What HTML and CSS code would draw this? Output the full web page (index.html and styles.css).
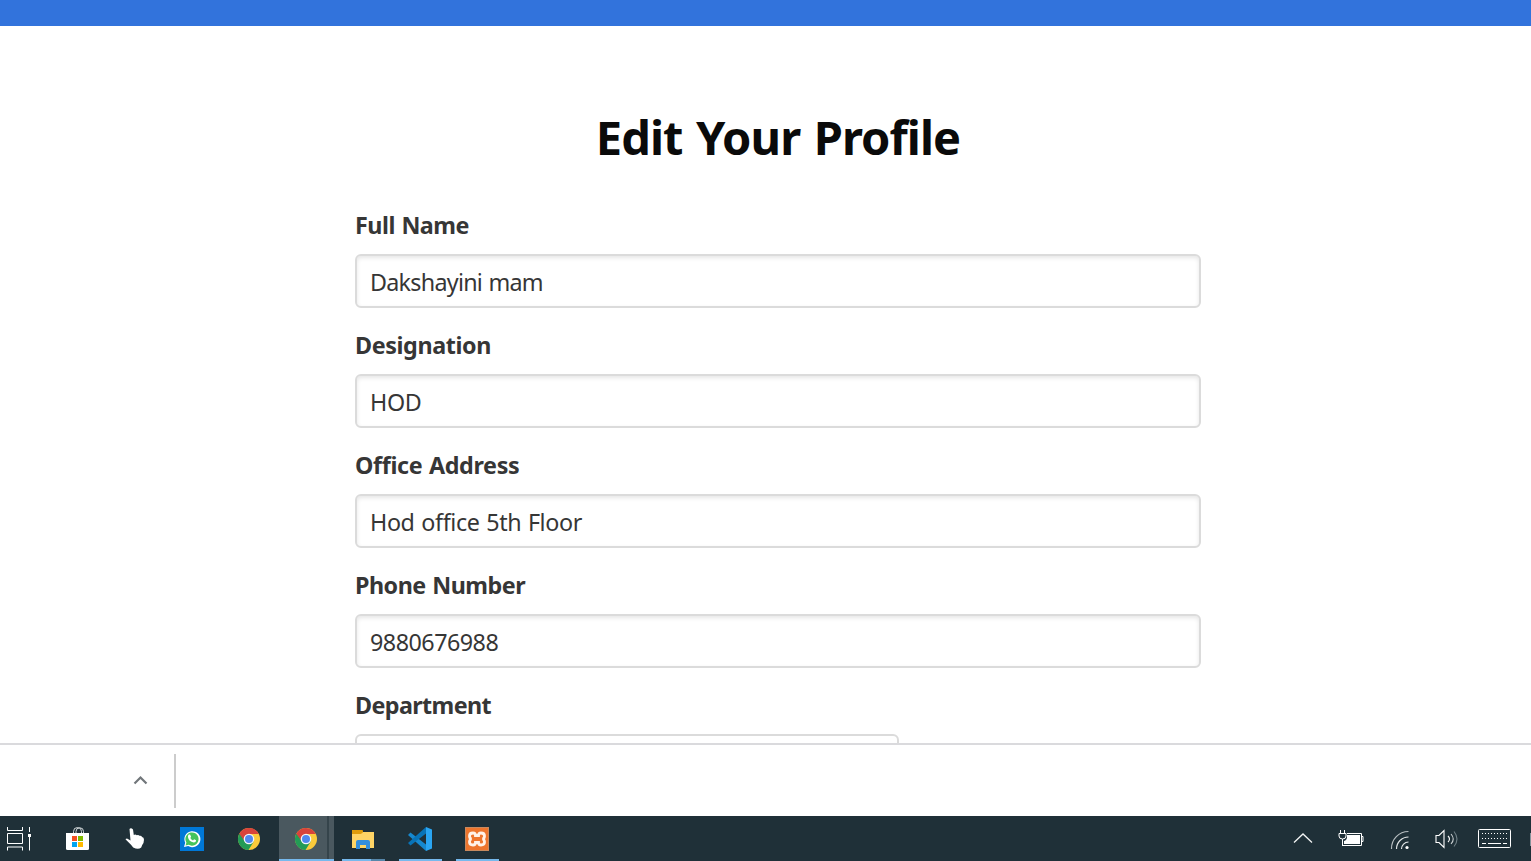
FILE: index.html
```html
<!DOCTYPE html>
<html lang="en">
<head>
<meta charset="utf-8">
<title>Edit Your Profile</title>
<link rel="stylesheet" href="styles.css">
</head>
<body>
<svg class="defs" width="0" height="0" aria-hidden="true">
  <defs>
    <g id="chrome">
      <circle cx="12" cy="12" r="11" fill="#fbcb3b"/>
      <path d="M12 12 2.2 6.8A11 11 0 0 0 11.5 23L16.8 14.5Z" fill="#239b56"/>
      <path d="M2.3 6.8A11 11 0 0 1 21.8 7H12L7.5 14Z" fill="#d8433b"/>
      <circle cx="12" cy="12" r="5.3" fill="#f4f6f8"/>
      <circle cx="12" cy="12" r="4" fill="#5088ee"/>
    </g>
  </defs>
</svg>
<div class="screen">
  <header class="navbar"></header>
  <main class="page">
    <form class="form">
      <h1 class="title">Edit Your Profile</h1>
      <div class="field"><label class="label l-name" for="name">Full Name</label><input class="input i-name" id="name" value="Dakshayini mam"></div>
      <div class="field"><label class="label l-desig" for="desig">Designation</label><input class="input i-desig" id="desig" value="HOD"></div>
      <div class="field"><label class="label l-office" for="office">Office Address</label><input class="input i-office" id="office" value="Hod office 5th Floor"></div>
      <div class="field"><label class="label l-phone" for="phone">Phone Number</label><input class="input i-phone" id="phone" value="9880676988"></div>
      <div class="field"><label class="label l-dept" for="dept">Department</label><input class="input select" id="dept"></div>
    </form>
  </main>
  <div class="downloads">
    <svg class="caret" width="15" height="10" viewBox="0 0 15 10"><path d="M1.500 8.500 7.500 2.500 13.500 8.500" fill="none" stroke="#71767a" stroke-width="2.200"/></svg>
    <span class="divider"></span>
  </div>
  <footer class="taskbar">
    <div class="apps">
      <div class="app">
        <svg class="taskview" width="28" height="26" viewBox="0 0 28 26" fill="none" stroke="#fff"><path d="M1.500 1v3.500h15V1M1.500 24.500v-3.500h15v3.500M1.500 7.500h15v10h-15zM23.500 1v5M23.500 11v13.500"/><path d="M22 8h3v3h-3z" fill="#fff" stroke="none"/></svg>
      </div>
      <div class="app">
        <svg width="24" height="26" viewBox="0 0 24 26"><path d="M7.500 8V5.500a4 4 0 0 1 8 0V8M10 7V5.500a3.500 3.500 0 0 1 7.500 0V8" fill="none" stroke="#cfd5d7"/><path d="M0 7h23v15.500q0 1.500-1.500 1.500H1.500Q0 24 0 22.500z" fill="#fff"/><path d="M6 10h5v5H6z" fill="#f25022"/><path d="M12 10h5v5h-5z" fill="#7fba00"/><path d="M6 16h5v5H6z" fill="#00a4ef"/><path d="M12 16h5v5h-5z" fill="#ffb900"/></svg>
      </div>
      <div class="app">
        <svg width="24" height="26" viewBox="0 0 24 26"><path d="M6.500 3q1.500-1.500 3.500.5l.8 5.500q1.500-1 3 .2 1.700-.7 2.700.6 2-.4 2.500 1.200 2 .4 2 2.700 0 3-1.800 5.300l-1 2.500q-3 2.500-8 0l-2-2.500-5-5Q1.500 12.500 4 12.500l3.500 2z" fill="#fff"/></svg>
      </div>
      <div class="app">
        <svg width="24" height="24" viewBox="0 0 24 24"><path d="M0 0h24v24H0z" fill="#0078d7"/><path d="m4 20 1.200-4.300A8 8 0 1 1 8.200 19z" fill="#fff"/><path d="m5.600 18.500.8-2.900a6.600 6.600 0 1 1 2.300 2.200z" fill="#45c45b"/><path d="M8.800 7.600h1.300l1 2.200-.8 1.200q.9 1.700 2.700 2.400l1.100-1.100 2 1q0 2.300-2.300 2.300Q8.600 14.500 7.900 9.700q0-1.400.9-2.100z" fill="#fff"/></svg>
      </div>
      <div class="app"><svg width="24" height="24" viewBox="0 0 24 24"><use href="#chrome"/></svg></div>
      <div class="app active"><svg width="24" height="24" viewBox="0 0 24 24"><use href="#chrome"/></svg></div>
      <div class="app open stacked">
        <svg width="24" height="24" viewBox="0 0 24 24"><path d="M1 5h22v16H1z" fill="#ffd465"/><path d="M1 3h10q1.500 0 1 1.500L11.500 6l-2 1H1z" fill="#df9c0c"/><path d="M5 22v-7q0-2 2-2h10q2 0 2 2v7h-4v-4H9v4z" fill="#338edd"/></svg>
      </div>
      <div class="app open">
        <svg width="24" height="24" viewBox="0 0 24 24"><path d="m0 8 2.500-2.500L18 17.500V24z" fill="#1688cf"/><path d="m0 16 2.500 2.500L18 6.500V0z" fill="#0873b7"/><path d="m18 0 6 2.500v19L18 24z" fill="#2aa5f2"/></svg>
      </div>
      <div class="app open">
        <svg width="24" height="24" viewBox="0 0 24 24"><path d="M0 0h24v24H0z" fill="#ed752d"/><path d="M.500.500h23v23H.500z" fill="none" stroke="#c78a60"/><path d="M8 6q-3.500 0-3.500 3 0 2.500 2 3-2 .5-2 3 0 3 3.500 3 2.500 0 2.500-2.500h3Q13.500 18 16 18q3.500 0 3.500-3 0-2.500-2-3 2-.5 2-3 0-3-3.500-3-2.500 0-2.500 2.500h-3Q10.500 6 8 6z" fill="none" stroke="#fff2e8" stroke-width="2.800"/></svg>
      </div>
    </div>
    <div class="tray">
      <svg class="t-chevron" width="20" height="26" viewBox="0 0 20 26"><path d="m1 15.500 9-8.500 9 8.500" fill="none" stroke="#f2f4f4" stroke-width="1.300"/></svg>
      <svg class="t-battery" width="26" height="26" viewBox="0 0 26 26"><path d="M9 6.500h14.500v12H4.500M24 9.500h1v5h-1M4.500 19v-7M2.500 3v4M6.500 3v4" fill="none" stroke="#fff"/><path d="M1 6.500h7V9q0 3-3.500 3T1 9z" fill="#1f3038" stroke="#fff"/><path d="M9 8h13v9H6v-3q3-1 3-4z" fill="#fff"/></svg>
      <svg class="t-wifi" width="20" height="26" viewBox="0 0 20 26"><g fill="none" stroke="#e3e7e8" stroke-width="1.200"><path d="M1.500 22A17 17 0 0 1 18.500 4.500" stroke="#b7bec1"/><path d="M6.500 22A12 12 0 0 1 18.500 10"/><path d="M11.500 22a7 7 0 0 1 7-7"/></g><circle cx="17" cy="20.500" r="1.600" fill="#fff"/></svg>
      <svg class="t-sound" width="24" height="26" viewBox="0 0 24 26"><g fill="none" stroke="#fff" stroke-width="1.100"><path d="M1 8.500h3l5-5v17l-5-5H1z"/><path d="M13 9q3 3 0 6"/><path d="M16 7q4.500 5 0 10" stroke="#cbd0d2"/><path d="M19 4.500q6 7.500 0 15" stroke="#718087"/></g></svg>
      <svg class="t-keyboard" width="33" height="26" viewBox="0 0 33 26"><rect x=".5" y="3.500" width="32" height="18" rx="1" fill="none" stroke="#fff"/><path d="M4 7.500h26M4 12.500h26" stroke="#fff" stroke-dasharray="1 2"/><path d="M4 17.500h4M10 17.500h13M25 17.500h4" stroke="#fff"/></svg>
      <span class="t-edge"></span>
    </div>
  </footer>
</div>
</body>
</html>
```
FILE: styles.css
```css
*, *::before, *::after { box-sizing: border-box; }
body { margin: 0; background: #fff; font-family: "Segoe UI", "Noto Sans", "Open Sans", sans-serif; }
.defs { display: block; }
.screen { width: 1531px; height: 861px; display: flex; flex-direction: column; overflow: hidden; }
.navbar { height: 26px; flex: none; background: #3273dc; }
.page { height: 717px; flex: none; overflow: hidden; }
.form { width: 846px; margin-left: 355px; }
.title { margin: 78px 0 0; height: 66px; line-height: 66px; font-size: 47px; font-weight: 700; letter-spacing: -.9px; word-spacing: 2px; color: #0a0a0a; text-align: center; white-space: nowrap; }
.field { display: flex; flex-direction: column; align-items: flex-start; padding-top: 18px; }
.title + .field { padding-top: 36px; }
.label { height: 38px; line-height: 38px; margin-bottom: 10px; font-size: 23.3px; font-weight: 700; word-spacing: 1px; color: #363636; white-space: nowrap; }
.l-name { letter-spacing: -.5px; }
.l-desig { letter-spacing: -.38px; }
.l-office { letter-spacing: -.35px; }
.l-phone { letter-spacing: -.5px; }
.l-dept { letter-spacing: -.6px; }
.input { width: 846px; height: 54px; padding: 1px 13px 0; border: 2px solid #dbdbdb; border-radius: 6px; box-shadow: inset 0 2px 4px rgba(10, 10, 10, .1); background: #fff; font: 23.3px "Segoe UI", "Noto Sans", "Open Sans", sans-serif; word-spacing: 1px; color: #363636; outline: none; }
.i-name { letter-spacing: -.73px; }
.i-desig { letter-spacing: -.3px; }
.i-office { letter-spacing: -.37px; }
.i-phone { letter-spacing: -.5px; }
.select { width: 544px; box-shadow: none; }
.downloads { height: 73px; flex: none; display: flex; align-items: flex-start; border-top: 2px solid #dadadd; background: #fff; padding-left: 133px; }
.caret { margin-top: 30px; }
.divider { width: 2px; height: 54px; margin: 9px 0 0 26px; background: #ccc; }
.taskbar { height: 45px; flex: none; display: flex; justify-content: space-between; background: #1f3038; }
.apps { display: flex; margin-left: -8px; }
.app { position: relative; width: 57px; height: 45px; display: flex; align-items: center; justify-content: center; }
.taskview { margin-right: 1px; }
.active::before { content: ""; position: absolute; left: 2px; top: 0; width: 55px; height: 45px; background: linear-gradient(90deg, transparent 48px, #35444b 48px, #35444b 50px, transparent 50px), #4a585f; border-bottom: 2px solid #76b9ed; }
.active svg { position: relative; }
.open::after { content: ""; position: absolute; left: 8px; bottom: 0; width: 43px; height: 2px; background: #76b9ed; }
.stacked::after { background: linear-gradient(90deg, #76b9ed 29px, #5687aa 29px); }
.tray { display: flex; padding-top: 11px; }
.t-battery { margin-left: 25px; }
.t-wifi { margin-left: 26px; }
.t-sound { margin-left: 25px; }
.t-keyboard { margin: -1px 0 0 19px; }
.t-edge { width: 1px; height: 13px; margin: 6px 0 0 19px; background: #85939a; }
```
